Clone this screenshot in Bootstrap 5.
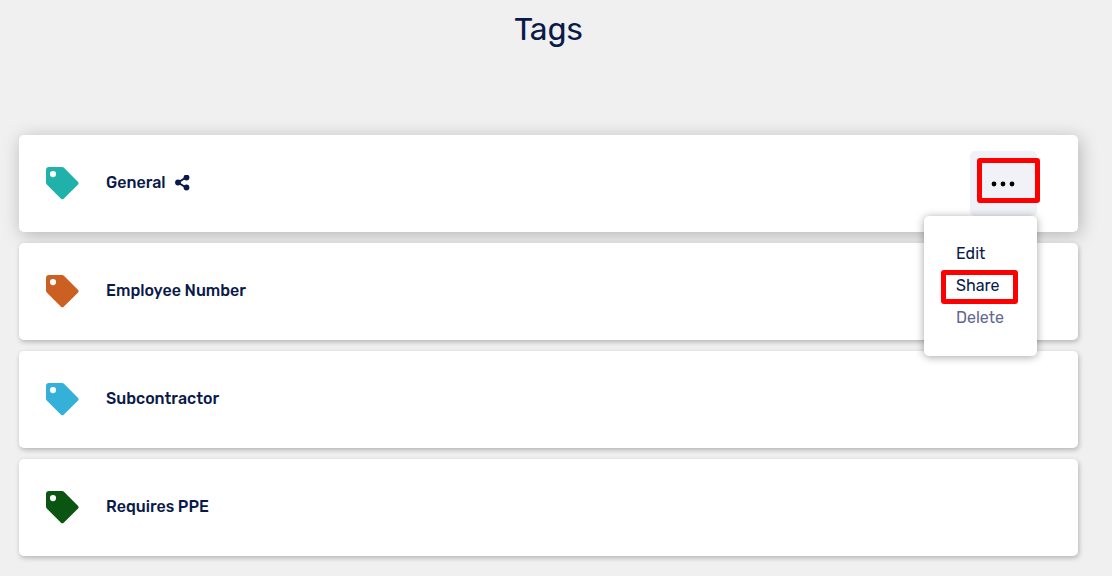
<!DOCTYPE html>
<html lang="en">
<head>
<meta charset="utf-8">
<meta name="viewport" content="width=device-width, initial-scale=1">
<title>Tags</title>
<link rel="stylesheet" href="https://cdn.jsdelivr.net/npm/bootstrap@5.3.0/dist/css/bootstrap.min.css">
<style>
  body { background: #f0f0f0; color: #091a4a; font-family: Rubik, Inter, sans-serif; font-size: 16px; line-height: 24px; }
  .page { padding: 8px 34px 20px 19px; }
  .page-title { font-size: 32px; line-height: 42px; font-weight: 400; margin-bottom: 85px; }
  .tag-list { gap: 11px; }
  .tag-card { min-height: 97px; padding: 0 41px 0 27px; gap: 27px; background: #fff; border-radius: 5px; box-shadow: 1px 2px 5px rgba(0,0,0,.25); }
  .tag-card.is-active { box-shadow: 2px 3px 18px rgba(0,0,0,.25); }
  .tag-label { padding-bottom: 1px; }
  .tag-name { font-size: 16px; line-height: 24px; font-weight: 500; }
  .tag-icon { width: 33px; height: 33px; }
  .more-btn { width: 67px; height: 65px; border: 0; border-radius: 5px; background: #f1f2f7; color: #000; }
  .tag-menu { position: absolute; top: 100%; right: 0; z-index: 5; width: 113px; padding: 22px 0; background: #fff; border-radius: 5px; box-shadow: 0 1px 9px rgba(0,0,0,.36); }
  .tag-menu a { display: block; position: relative; padding: 4px 0 4px 32px; color: #091a4a; text-decoration: none; }
  .tag-menu a.muted-item { color: #5f6890; }
  .callout { position: absolute; border: 5px solid #f00; border-radius: 3px; pointer-events: none; }
  .callout-more { top: 7px; left: 7px; width: 63px; height: 45px; }
  .callout-share { top: 0; left: 17px; width: 77px; height: 34px; }
</style>
</head>
<body>
<svg class="d-none" aria-hidden="true">
  <symbol id="tag" viewBox="0 0 33 33">
    <path fill="currentColor" fill-rule="evenodd" d="M3 0H16Q17.2 0 18.2 1L32.1 14.9Q33.1 16.2 32.1 17.5L17.7 31.8Q16.4 32.9 15 31.8L1 17.8Q0 16.8 0 15.6V3Q0 0 3 0ZM7 4A3.1 3.1 0 1 0 7 10.2A3.1 3.1 0 1 0 7 4Z"/>
  </symbol>
</svg>
<main class="page">
  <h1 class="page-title text-center">Tags</h1>
  <ul class="tag-list list-unstyled d-flex flex-column mb-0">
    <li class="tag-card is-active d-flex align-items-center">
      <svg class="tag-icon flex-shrink-0" style="color:#20b2aa" aria-hidden="true"><use href="#tag"/></svg>
      <div class="tag-label d-flex align-items-center flex-grow-1">
        <h2 class="tag-name mb-0 me-2">General</h2>
        <svg width="16" height="16" viewBox="0 0 16 16" role="img" aria-label="Shared">
          <path d="M12 2.5L4 7.5L12 12.5" fill="none" stroke="currentColor" stroke-width="2"/>
          <g fill="currentColor"><circle cx="12.5" cy="2.5" r="2.9"/><circle cx="4" cy="7.5" r="2.9"/><circle cx="12.5" cy="12.5" r="2.9"/></g>
        </svg>
      </div>
      <div class="position-relative">
        <button type="button" class="more-btn d-flex align-items-center justify-content-center p-0" aria-label="More actions" aria-expanded="true">
          <svg width="25" height="6" viewBox="0 0 25 6" fill="currentColor" aria-hidden="true"><circle cx="3" cy="3" r="2.4"/><circle cx="12" cy="3" r="2.4"/><circle cx="21" cy="3" r="2.4"/></svg>
        </button>
        <nav class="tag-menu" aria-label="Tag actions">
          <a href="#edit">Edit</a>
          <a href="#share">Share<span class="callout callout-share"></span></a>
          <a href="#delete" class="muted-item">Delete</a>
        </nav>
        <span class="callout callout-more"></span>
      </div>
    </li>
    <li class="tag-card d-flex align-items-center">
      <svg class="tag-icon flex-shrink-0" style="color:#cc5f22" aria-hidden="true"><use href="#tag"/></svg>
      <h2 class="tag-label tag-name mb-0">Employee Number</h2>
    </li>
    <li class="tag-card d-flex align-items-center">
      <svg class="tag-icon flex-shrink-0" style="color:#34b1d8" aria-hidden="true"><use href="#tag"/></svg>
      <h2 class="tag-label tag-name mb-0">Subcontractor</h2>
    </li>
    <li class="tag-card d-flex align-items-center">
      <svg class="tag-icon flex-shrink-0" style="color:#0b5512" aria-hidden="true"><use href="#tag"/></svg>
      <h2 class="tag-label tag-name mb-0">Requires PPE</h2>
    </li>
  </ul>
</main>
<script src="https://cdn.jsdelivr.net/npm/bootstrap@5.3.0/dist/js/bootstrap.bundle.min.js"></script>
</body>
</html>
